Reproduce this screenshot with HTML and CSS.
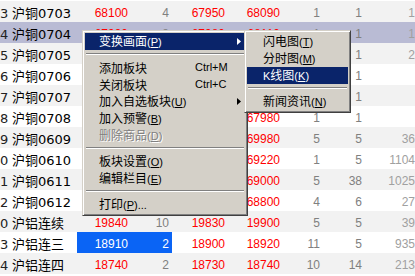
FILE: index.html
```html
<!DOCTYPE html>
<html lang="zh-CN">
<head>
  <meta charset="UTF-8">
  <title>行情 - 期货报价</title>
  <link rel="stylesheet" href="styles.css">
</head>
<body>

<!-- Liste des cotations (cellules cachées par le menu laissées vides) -->
<div class="quotes">
  <div class="row"><span class="no">3</span><span class="name">沪铜0703</span><span class="up">68100</span><span class="vol">4</span><span class="up">67950</span><span class="up">68090</span><span class="vol">1</span><span class="vol">1</span><span class="vol">1</span></div>
  <div class="row current"><span class="no">4</span><span class="name">沪铜0704</span><span class="up">67990</span><span class="vol">8</span><span class="up">67980</span><span class="up">68110</span><span class="vol">1</span><span class="vol">1</span><span class="vol">1</span></div>
  <div class="row"><span class="no">5</span><span class="name">沪铜0705</span><span class="up"></span><span class="vol"></span><span class="up"></span><span class="up"></span><span class="vol"></span><span class="vol">1</span><span class="vol">2</span></div>
  <div class="row"><span class="no">6</span><span class="name">沪铜0706</span><span class="up"></span><span class="vol"></span><span class="up"></span><span class="up"></span><span class="vol"></span><span class="vol">1</span><span class="vol"></span></div>
  <div class="row"><span class="no">7</span><span class="name">沪铜0707</span><span class="up"></span><span class="vol"></span><span class="up"></span><span class="up"></span><span class="vol"></span><span class="vol">1</span><span class="vol"></span></div>
  <div class="row"><span class="no">8</span><span class="name">沪铜0708</span><span class="up"></span><span class="vol"></span><span class="up"></span><span class="up">67980</span><span class="vol">1</span><span class="vol">1</span><span class="vol"></span></div>
  <div class="row"><span class="no">9</span><span class="name">沪铜0609</span><span class="up"></span><span class="vol"></span><span class="up"></span><span class="up">69980</span><span class="vol">5</span><span class="vol">5</span><span class="vol">36</span></div>
  <div class="row"><span class="no">0</span><span class="name">沪铜0610</span><span class="up"></span><span class="vol"></span><span class="up"></span><span class="up">69220</span><span class="vol">1</span><span class="vol">5</span><span class="vol">1104</span></div>
  <div class="row"><span class="no">1</span><span class="name">沪铜0611</span><span class="up"></span><span class="vol"></span><span class="up"></span><span class="up">69000</span><span class="vol">5</span><span class="vol">38</span><span class="vol">1025</span></div>
  <div class="row"><span class="no">2</span><span class="name">沪铜0612</span><span class="up"></span><span class="vol"></span><span class="up"></span><span class="up">68800</span><span class="vol">4</span><span class="vol">6</span><span class="vol">27</span></div>
  <div class="row"><span class="no">0</span><span class="name">沪铝连续</span><span class="up">19840</span><span class="vol">10</span><span class="up">19830</span><span class="up">19900</span><span class="vol">5</span><span class="vol">5</span><span class="vol">39</span></div>
  <div class="row"><span class="no">3</span><span class="name">沪铝连三</span><span class="up sel">18910</span><span class="vol sel">2</span><span class="up">18900</span><span class="up">18920</span><span class="vol">11</span><span class="vol">5</span><span class="vol">935</span></div>
  <div class="row"><span class="no">4</span><span class="name">沪铝连四</span><span class="up">18740</span><span class="vol">2</span><span class="up">18730</span><span class="up">18740</span><span class="vol">10</span><span class="vol">14</span><span class="vol">213</span></div>
</div>

<!-- Menu contextuel -->
<div class="menu main-menu">
  <div class="item active"><span class="label">变换画面<span class="k">(<u>P</u>)</span></span><span class="arrow"></span></div>
  <div class="sep"></div>
  <div class="item"><span class="label">添加板块</span><span class="short">Ctrl+M</span></div>
  <div class="item"><span class="label">关闭板块</span><span class="short">Ctrl+C</span></div>
  <div class="item"><span class="label">加入自选板块<span class="k">(<u>U</u>)</span></span><span class="arrow"></span></div>
  <div class="item"><span class="label">加入预警<span class="k">(<u>B</u>)</span></span></div>
  <div class="item disabled"><span class="label">删除商品<span class="k">(<u>D</u>)</span></span></div>
  <div class="sep"></div>
  <div class="item"><span class="label">板块设置<span class="k">(<u>O</u>)</span></span></div>
  <div class="item"><span class="label">编辑栏目<span class="k">(<u>E</u>)</span></span></div>
  <div class="sep"></div>
  <div class="item"><span class="label">打印<span class="k">(<u>P</u>)...</span></span></div>
</div>

<!-- Sous-menu "变换画面" -->
<div class="menu sub-menu">
  <div class="item"><span class="label">闪电图<span class="k">(<u>T</u>)</span></span></div>
  <div class="item"><span class="label">分时图<span class="k">(<u>M</u>)</span></span></div>
  <div class="item active"><span class="label"><span class="k">K</span>线图<span class="k">(<u>K</u>)</span></span></div>
  <div class="sep"></div>
  <div class="item"><span class="label">新闻资讯<span class="k">(<u>N</u>)</span></span></div>
</div>

</body>
</html>
```

FILE: styles.css
```css
* {
  margin: 0;
  padding: 0;
  box-sizing: border-box;
}

body {
  background: #ffffff;
  overflow: hidden;
  position: relative;
  height: 276px;
}

/* Tableau des cotations */
.quotes {
  padding-top: 1px;
}

.row {
  display: grid;
  grid-template-columns: 9px 68px 54px 41px 56px 55px 40px 42px 53px;
  height: 21px;
  font-family: 'Liberation Sans', sans-serif;
  font-size: 12px;
  white-space: nowrap;
}

.row:nth-child(odd) {
  background: #f2f2f2;
}

.row.current {
  background: #b9bbd4;
}

.row span {
  padding-top: 4px;
  line-height: 17px;
  text-align: right;
  padding-right: 3px;
  overflow: hidden;
}

.row .no {
  font-family: 'DejaVu Sans', sans-serif;
  font-size: 13px;
  color: #222;
  padding-right: 1px;
}

.row .name {
  font-family: 'DejaVu Sans', 'Noto Sans CJK SC', sans-serif;
  font-size: 13px;
  color: #000;
  text-align: left;
  padding-left: 3px;
}

.up {
  color: #ff0000;
}

.vol {
  color: #808080;
}

.row .vol:last-child {
  color: #a0a0a0;
}

.row .sel {
  background: #0a64f5;
  color: #ffffff;
}

/* Menus style Windows classique */
.menu {
  position: absolute;
  background: #d4d0c8;
  border: 1px solid;
  border-color: #d4d0c8 #404040 #404040 #d4d0c8;
  box-shadow: inset 1px 1px 0 #ffffff, inset -1px -1px 0 #808080;
  padding: 2px;
  font-family: 'Noto Sans CJK SC', sans-serif;
  font-size: 12px;
  color: #000;
  z-index: 10;
}

.main-menu {
  left: 82px;
  top: 30px;
  width: 166px;
}

.sub-menu {
  left: 244px;
  top: 30px;
  width: 107px;
  z-index: 11;
}

.item {
  display: flex;
  align-items: center;
  height: 17px;
  line-height: 17px;
  padding-left: 14px;
  padding-right: 4px;
  white-space: nowrap;
}

.sub-menu .item {
  padding-left: 16px;
}

.item .label {
  flex: 1;
}

.item .k {
  font-family: 'Liberation Sans', sans-serif;
  font-size: 11px;
}

.item .short {
  width: 46px;
  font-family: 'Liberation Sans', sans-serif;
  font-size: 11px;
}

.item .arrow {
  width: 4px;
  height: 7px;
  background: #000;
  clip-path: polygon(0 0, 100% 50%, 0 100%);
}

.item.active {
  background: #0a246a;
  color: #ffffff;
}

.item.active .arrow {
  background: #ffffff;
}

.item.disabled {
  color: #808080;
  text-shadow: 1px 1px 0 #ffffff;
}

.sep {
  height: 2px;
  margin: 3px 1px 4px;
  border-top: 1px solid #808080;
  border-bottom: 1px solid #ffffff;
}
```
